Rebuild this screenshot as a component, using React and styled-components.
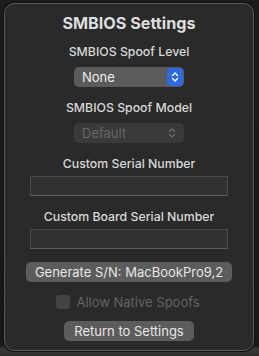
import React from "react";
import styled, { createGlobalStyle } from "styled-components";

const GlobalStyle = createGlobalStyle`
  html, body {
    margin: 0;
    padding: 0;
    background: #1a1a1a;
    font-family: Inter, "Open Sans", "Liberation Sans", sans-serif;
    -webkit-font-smoothing: antialiased;
  }
`;

const Screen = styled.div`
  width: 259px;
  height: 356px;
  box-sizing: border-box;
  padding: 3px 5px 6px 4px;
  background: linear-gradient(180deg, #1b1b1b 0%, #181818 97%, #3a3a38 98%, #2c2c2a 100%);
`;

const Panel = styled.div`
  box-sizing: border-box;
  height: 348px;
  background: #2a2a2a;
  border: 1px solid #5a5a5a;
  border-radius: 10px;
  box-shadow: 0 0 0 1px #111;
  display: flex;
  flex-direction: column;
  align-items: center;
  padding-top: 9px;
`;

const Title = styled.h1`
  margin: 0;
  font-size: 16.2px;
  line-height: 20px;
  font-weight: 700;
  color: #dedede;
`;

const Label = styled.div`
  margin-top: ${(p) => p.$gap}px;
  font-size: 12.3px;
  line-height: 16px;
  font-weight: 500;
  color: #d8d8d8;
`;

const Select = styled.div`
  margin-top: ${(p) => p.$gap}px;
  box-sizing: border-box;
  width: 110px;
  height: 20px;
  border-radius: 5px;
  background: ${(p) => (p.$disabled ? "#3a3a3a" : "#5b5b5b")};
  display: flex;
  align-items: center;
  justify-content: space-between;
  padding: 0 1px 0 8px;
  font-size: 13px;
  color: ${(p) => (p.$disabled ? "#666" : "#ececec")};
`;

const Stepper = styled.span`
  width: 16px;
  height: 18px;
  border-radius: 4px;
  background: ${(p) => (p.$disabled ? "transparent" : "#2c6ae0")};
  display: flex;
  align-items: center;
  justify-content: center;
  margin-right: ${(p) => (p.$disabled ? "3px" : "0")};
`;

const Field = styled.div`
  margin-top: ${(p) => p.$gap}px;
  box-sizing: border-box;
  width: 198px;
  height: 20px;
  background: #313131;
  border: 1px solid #4a4a4a;
  border-bottom-color: #5c5c5c;
`;

const Button = styled.div`
  margin-top: ${(p) => p.$gap}px;
  box-sizing: border-box;
  width: ${(p) => p.$width}px;
  height: 20px;
  border-radius: 5px;
  background: #5c5c5c;
  display: flex;
  align-items: center;
  justify-content: center;
  font-size: 13px;
  color: #e6e6e6;
`;

const CheckRow = styled.div`
  margin-top: 13px;
  height: 14px;
  display: flex;
  align-items: center;
  gap: 6px;
  font-size: 13px;
  color: #636363;
  margin-left: -2px;
`;

const Box = styled.span`
  width: 14px;
  height: 14px;
  border-radius: 3px;
  background: #434343;
`;

const Arrows = ({ color }) => (
  <svg width="8" height="12" viewBox="0 0 8 12" fill="none">
    <path
      d="M1.5 4.5 L4 2 L6.5 4.5 M1.5 7.5 L4 10 L6.5 7.5"
      stroke={color}
      strokeWidth="1.4"
      strokeLinecap="round"
      strokeLinejoin="round"
    />
  </svg>
);

export default function App() {
  return (
    <Screen>
      <GlobalStyle />
      <Panel>
        <Title>SMBIOS Settings</Title>
        <Label $gap={11}>SMBIOS Spoof Level</Label>
        <Select $gap={7}>
          None
          <Stepper>
            <Arrows color="#fff" />
          </Stepper>
        </Select>
        <Label $gap={13}>SMBIOS Spoof Model</Label>
        <Select $gap={7} $disabled>
          Default
          <Stepper $disabled>
            <Arrows color="#6a6a6a" />
          </Stepper>
        </Select>
        <Label $gap={13}>Custom Serial Number</Label>
        <Field $gap={4} />
        <Label $gap={13}>Custom Board Serial Number</Label>
        <Field $gap={4} />
        <Button $gap={13} $width={206}>
          Generate S/N: MacBookPro9,2
        </Button>
        <CheckRow>
          <Box />
          Allow Native Spoofs
        </CheckRow>
        <Button $gap={12} $width={130}>
          Return to Settings
        </Button>
      </Panel>
    </Screen>
  );
}
